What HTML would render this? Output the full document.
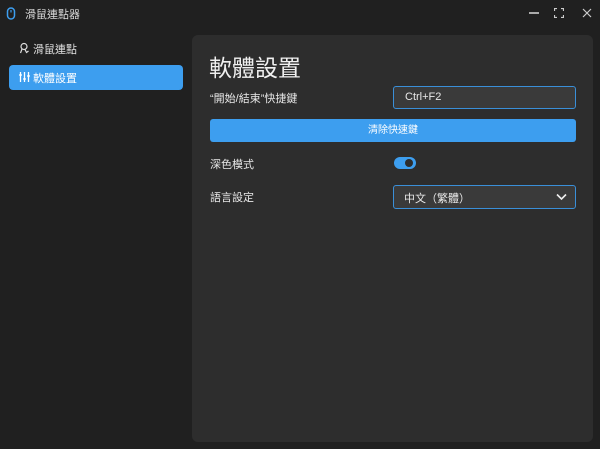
<!DOCTYPE html>
<html><head><meta charset="utf-8"><style>
*{margin:0;padding:0;box-sizing:border-box}
body{width:600px;height:449px;background:#202020;font-family:"Liberation Sans","Noto Sans CJK TC",sans-serif;color:#e8e8e8;position:relative;overflow:hidden;font-size:11px}
.a{position:absolute}
.panel{left:192px;top:35px;width:401px;height:407px;background:#2d2d2d;border-radius:6px}
.field{background:#3a3a3a;border:1.5px solid #3a8fd8;border-radius:3px}
</style></head><body>
<svg class="a" style="left:6px;top:7px" width="10" height="13" viewBox="0 0 10 13"><rect x="1.5" y="1" width="7" height="11" rx="3.5" fill="none" stroke="#3d9eef" stroke-width="1.5"/><line x1="5" y1="3" x2="5" y2="5.5" stroke="#3d9eef" stroke-width="1.2"/></svg>
<div class="a" style="left:25px;top:6px;font-size:11px;color:#ddd">滑鼠連點器</div>
<div class="a" style="left:529px;top:12px;width:10px;height:1.5px;background:#aaa"></div>
<svg class="a" style="left:554px;top:8px" width="10" height="10" viewBox="0 0 10 10" fill="none" stroke="#ccc" stroke-width="1.2"><path d="M0.5 3V0.5H3M7 0.5H9.5V3M9.5 7V9.5H7M3 9.5H0.5V7"/></svg>
<svg class="a" style="left:582px;top:8px" width="10" height="10" viewBox="0 0 10 10" stroke="#ccc" stroke-width="1.2"><path d="M1 1L9 9M9 1L1 9"/></svg>

<svg class="a" style="left:19px;top:42px" width="11" height="12" viewBox="0 0 11 12" fill="none" stroke="#ddd" stroke-width="1.2"><circle cx="5" cy="4.5" r="3"/><path d="M3 7L1.5 11M6 7.5L7.5 10.5L9.5 9"/></svg>
<div class="a" style="left:33px;top:41px;font-size:11px;color:#e0e0e0">滑鼠連點</div>
<div class="a" style="left:9px;top:65px;width:174px;height:25px;background:#3d9eef;border-radius:4px"></div>
<svg class="a" style="left:19px;top:71px" width="11" height="12" viewBox="0 0 11 12" stroke="#fff" stroke-width="1.3"><path d="M1.5 1V11M5.5 1V11M9.5 1V11"/><path d="M0 4H3M4 8H7M8 5H11"/></svg>
<div class="a" style="left:33px;top:70px;font-size:11px;color:#fff">軟體設置</div>

<div class="a panel"></div>
<div class="a" style="left:209px;top:49px;font-size:23px;color:#f0f0f0">軟體設置</div>
<div class="a" style="left:210px;top:90px">“開始/結束”快捷鍵</div>
<div class="a field" style="left:393px;top:86px;width:183px;height:23px"></div>
<div class="a" style="left:405px;top:91px;font-size:11px">Ctrl+F2</div>
<div class="a" style="left:210px;top:119px;width:366px;height:23px;background:#3d9eef;border-radius:3px;color:#fff;text-align:center;line-height:23px;font-size:10px">清除快速鍵</div>
<div class="a" style="left:210px;top:156px">深色模式</div>
<div class="a" style="left:394px;top:157px;width:22px;height:12px;border-radius:6px;background:#3d9eef"></div>
<div class="a" style="left:405px;top:159px;width:8px;height:8px;border-radius:50%;background:#2d2d2d"></div>
<div class="a" style="left:210px;top:189px">語言設定</div>
<div class="a field" style="left:393px;top:185px;width:183px;height:24px"></div>
<div class="a" style="left:404px;top:190px;font-size:11px">中文（繁體）</div>
<svg class="a" style="left:556px;top:193px" width="11" height="8" viewBox="0 0 11 8" fill="none" stroke="#eee" stroke-width="1.6"><path d="M1 1.5L5.5 6L10 1.5"/></svg>
</body></html>
